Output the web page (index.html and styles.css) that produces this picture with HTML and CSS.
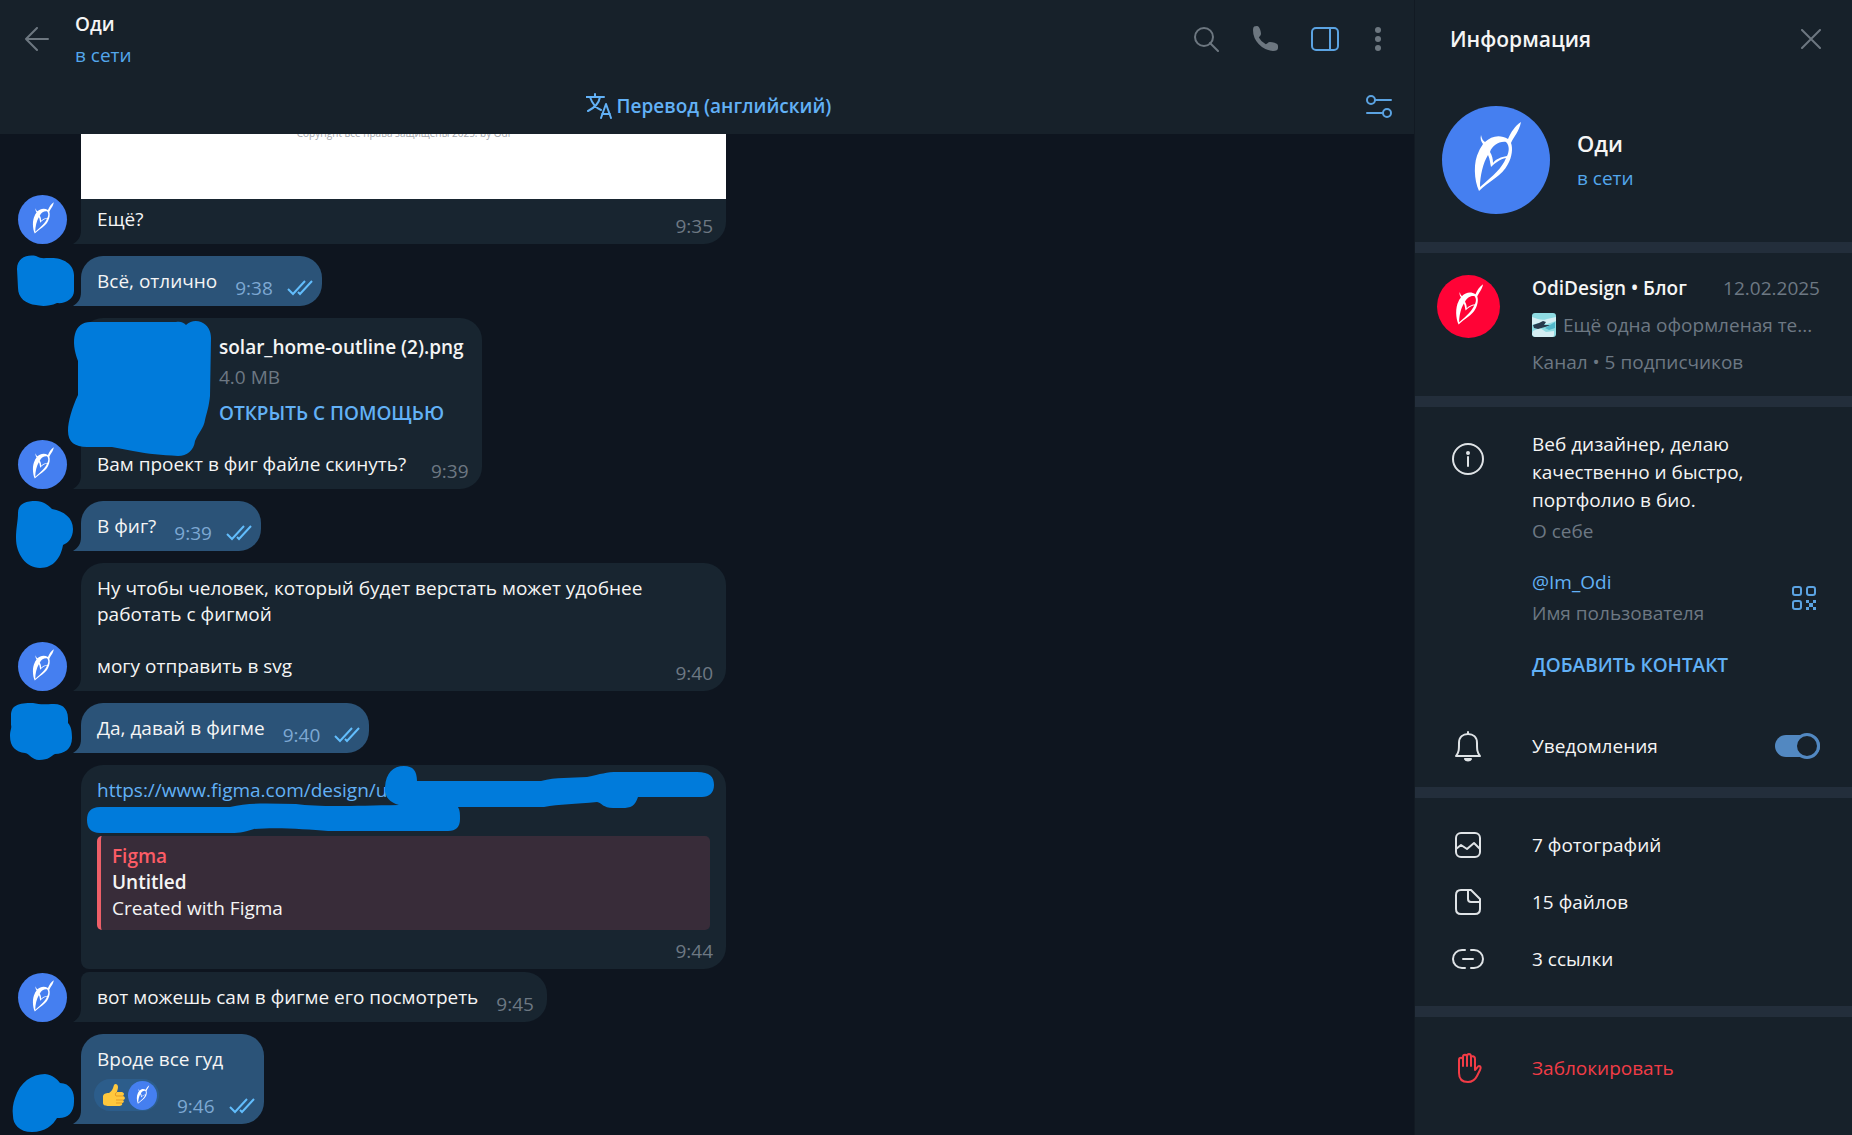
FILE: index.html
```html
<!DOCTYPE html>
<html lang="ru">
<head>
  <meta charset="UTF-8">
  <meta name="viewport" content="width=device-width, initial-scale=1.0">
  <title>Оди</title>
  <link rel="stylesheet" href="styles.css">
</head>

<body>
  <svg class="sprite" aria-hidden="true">
    <symbol id="logo" viewBox="0 0 108 108">
      <path fill="#fff" d="M79 16C77 26 72 30 69 37C71 42 70 51 66 58C60 70 47 75 37 85C32 74 31 56 37 45C38 42 40 40 41 38C39 35 38 33 39 29C40 33 41 35 43 36C49 30 58 28 66 33C69 26 73 20 79 16Z"/>
      <path class="logo-hole" d="M48 46C50 40 57 35 64 36C68 40 67 46 65 50C59 51 54 53 51 57C51 53 50 49 48 46ZM46 49C48 53 48 57 49 61C53 57 58 53 64 52C60 62 52 69 38 81C38 70 41 57 46 49Z"/>
    </symbol>
    <symbol id="checks" viewBox="0 0 26 16">
      <path d="M1 9l5 5L18 1M11 12l2 2L25 1" fill="none" stroke="currentColor" stroke-width="2"/>
    </symbol>
    <symbol id="tail" viewBox="0 0 10 24">
      <path d="M8 0V10C8 17 5 21 0 24H10V0Z" fill="currentColor"/>
    </symbol>
  </svg>

  <div class="app">
    <main class="chat">
      <header class="chat-header">
        <div class="chat-top">
          <button class="icon-btn" aria-label="Назад">
            <svg width="24" height="24" viewBox="0 0 24 24"><path d="M12 1L1 12l11 11M1 12h22"/></svg>
          </button>
          <div class="chat-title">
            <h1>Оди</h1>
            <p class="online">в сети</p>
          </div>
          <div class="chat-actions">
            <button class="icon-btn" aria-label="Поиск">
              <svg width="26" height="26" viewBox="0 0 26 26"><circle cx="11" cy="11" r="9"/><path d="M17 17l8 8"/></svg>
            </button>
            <button class="icon-btn" aria-label="Позвонить">
              <svg width="26" height="26" viewBox="0 0 26 26"><path class="solid" d="M2 4C2 1 3 1 5 1C7 1 8 7 8 8C8 10 5 10 6 12C8 16 11 18 13 19C15 20 16 17 18 17C20 17 25 18 25 20V22C25 24 23 24 21 24C10 23 2 14 2 4Z"/></svg>
            </button>
            <button class="icon-btn active" aria-label="Панель информации">
              <svg width="28" height="26" viewBox="0 0 28 26"><rect x="1" y="2" width="26" height="22" rx="4"/><path d="M19 2v22"/></svg>
            </button>
            <button class="icon-btn" aria-label="Меню">
              <svg width="26" height="26" viewBox="0 0 26 26"><g class="solid"><circle cx="13" cy="4" r="3"/><circle cx="13" cy="13" r="3"/><circle cx="13" cy="22" r="3"/></g></svg>
            </button>
          </div>
        </div>
        <div class="translate-bar">
          <button class="translate-btn">
            <svg width="26" height="26" viewBox="0 0 26 26"><path d="M0 4h18M9 1v3M4 4C6 10 10 15 15 17M14 4C13 10 8 15 2 18M15 25l5-14l5 14M16 21h8"/></svg>
            Перевод (английский)
          </button>
          <button class="icon-btn active" aria-label="Настройки перевода">
            <svg width="26" height="24" viewBox="0 0 26 24"><circle cx="5" cy="6" r="4"/><path d="M9 6h16M1 19h16"/><circle cx="21" cy="19" r="4"/></svg>
          </button>
        </div>
      </header>

      <section class="messages">
        <div class="row">
          <span class="avatar"><svg><use href="#logo"/></svg></span>
          <article class="bubble wide photo-bubble">
            <div class="photo">Copyright все права защищены 2025. by Odi</div>
            <div class="line"><p>Ещё?</p><time>9:35</time></div>
            <svg class="tail"><use href="#tail"/></svg>
          </article>
        </div>

        <div class="row">
          <svg class="scribble" viewBox="0 0 81 74"><path d="M17 25C17 14 27 10 36 12C41 15 44 14 49 14C61 13 74 19 74 31V47C74 55 65 60 57 59C48 63 40 62 36 61C26 60 18 54 18 44Z"/></svg>
          <article class="bubble own">
            <div class="line"><p>Всё, отлично</p><time>9:38</time><svg class="checks"><use href="#checks"/></svg></div>
            <svg class="tail"><use href="#tail"/></svg>
          </article>
        </div>

        <div class="row">
          <span class="avatar"><svg><use href="#logo"/></svg></span>
          <article class="bubble">
            <div class="file">
              <svg class="file-scribble" viewBox="0 0 144 138"><path d="M7 16C9 8 15 4 22 4H108C113 3 116 5 118 7C122 3 128 2 133 4C140 7 143 13 143 20L142 78C141 88 139 94 137 102C136 110 130 115 127 123C126 132 119 138 110 138C93 137 81 136 65 133L44 129H19C7 129 0 124 0 113C0 103 4 90 10 77V43C6 33 5 23 7 16Z"/></svg>
              <div class="file-info">
                <strong>solar_home-outline (2).png</strong>
                <span class="muted">4.0 MB</span>
                <button class="text-btn">ОТКРЫТЬ С ПОМОЩЬЮ</button>
              </div>
            </div>
            <div class="line"><p>Вам проект в фиг файле скинуть?</p><time>9:39</time></div>
            <svg class="tail"><use href="#tail"/></svg>
          </article>
        </div>

        <div class="row">
          <svg class="scribble" viewBox="0 0 81 74"><path d="M18 24C18 15 25 12 36 12C43 12 48 16 52 20C64 22 73 29 73 40C73 49 68 54 63 56C61 68 54 79 40 79C26 79 16 65 16 49C16 39 18 32 18 24Z"/></svg>
          <article class="bubble own">
            <div class="line"><p>В фиг?</p><time>9:39</time><svg class="checks"><use href="#checks"/></svg></div>
            <svg class="tail"><use href="#tail"/></svg>
          </article>
        </div>

        <div class="row">
          <span class="avatar"><svg><use href="#logo"/></svg></span>
          <article class="bubble wide">
            <div class="line"><p>Ну чтобы человек, который будет верстать может удобнее работать с фигмой<br><br>могу отправить в svg</p><time>9:40</time></div>
            <svg class="tail"><use href="#tail"/></svg>
          </article>
        </div>

        <div class="row">
          <svg class="scribble" viewBox="0 0 81 74"><path d="M11 25C11 14 18 12 33 12C41 14 46 13 54 13C64 13 69 19 68 32C71 35 72 40 72 47C72 58 64 63 55 63C51 65 49 69 39 69C32 69 30 63 25 62C16 61 10 56 10 45C10 39 12 37 11 34Z"/></svg>
          <article class="bubble own">
            <div class="line"><p>Да, давай в фигме</p><time>9:40</time><svg class="checks"><use href="#checks"/></svg></div>
            <svg class="tail"><use href="#tail"/></svg>
          </article>
        </div>

        <div class="row">
          <article class="bubble wide">
            <p class="link-text"><a href="#">https://www.figma.com/design/u</a></p>
            <svg class="link-scribble" viewBox="0 0 645 74"><path d="M304 22C305 8 312 1 323 1C332 1 336 6 336 16H460C475 12 490 13 506 12C520 9 525 7 537 7H616C629 7 633 12 633 20C633 28 628 32 621 32H557C554 41 550 43 541 43H532C522 43 521 38 516 37C495 39 478 39 463 42H377C379 45 379 49 379 54C379 62 375 66 367 66H247C225 64 195 62 173 64C161 68 157 68 147 68H19C10 68 6 63 6 55C6 47 10 42 19 42H149C170 37 192 39 215 39C237 42 269 41 318 40C308 37 303 31 304 22Z"/></svg>
            <a class="preview" href="#">
              <span class="preview-site">Figma</span>
              <strong>Untitled</strong>
              <span>Created with Figma</span>
            </a>
            <div class="line line-end"><time>9:44</time></div>
          </article>
        </div>

        <div class="row row-joined">
          <span class="avatar"><svg><use href="#logo"/></svg></span>
          <article class="bubble joined">
            <div class="line"><p>вот можешь сам в фигме его посмотреть</p><time>9:45</time></div>
            <svg class="tail"><use href="#tail"/></svg>
          </article>
        </div>

        <div class="row">
          <svg class="scribble" viewBox="0 0 81 74"><path d="M15 36C20 20 32 12 45 12C53 13 57 17 60 21C70 21 75 30 74 40C74 51 67 57 57 56C53 63 45 70 32 70C19 70 13 62 13 54C12 47 13 42 15 36Z"/></svg>
          <article class="bubble own">
            <p>Вроде все гуд</p>
            <div class="line">
              <button class="reaction" aria-label="Реакция">
                <svg width="24" height="24" viewBox="0 0 24 24"><path fill="#ffc83d" d="M1 13C2 10 5 10 7 10C11 7 11 5 12 2C13 0 16 1 16 4C16 6 15 8 15 9H20C23 10 22 12 21 13C24 14 23 17 21 17C23 19 21 20 20 20C21 22 19 23 17 23H8C5 23 1 23 1 20Z"/><path fill="none" stroke="#e49b25" stroke-width="1" d="M15 9C13 10 13 12 14 13M14 13h7M14 17h7M14 20h6"/></svg>
                <span class="avatar avatar-small"><svg><use href="#logo"/></svg></span>
              </button>
              <time>9:46</time><svg class="checks"><use href="#checks"/></svg>
            </div>
            <svg class="tail"><use href="#tail"/></svg>
          </article>
        </div>
      </section>
    </main>

    <aside class="info">
      <header class="info-header">
        <h2>Информация</h2>
        <button class="icon-btn" aria-label="Закрыть">
          <svg width="20" height="20" viewBox="0 0 20 20"><path d="M1 1l18 18M19 1L1 19"/></svg>
        </button>
      </header>

      <section class="profile">
        <span class="avatar avatar-large"><svg><use href="#logo"/></svg></span>
        <div>
          <h3>Оди</h3>
          <p class="online">в сети</p>
        </div>
      </section>

      <section class="channel">
        <span class="avatar avatar-channel"><svg><use href="#logo"/></svg></span>
        <div class="channel-body">
          <div class="channel-row"><strong>OdiDesign • Блог</strong><span class="muted">12.02.2025</span></div>
          <div class="channel-row channel-post">
            <svg width="24" height="24" viewBox="0 0 24 24"><rect width="24" height="24" rx="3" fill="#8edbe2"/><path fill="#d5eef3" d="M0 4C6 6 10 8 15 6L24 4V8L15 11L6 10L0 12ZM1 18L8 15L14 19L22 18V22C22 23 21 24 20 24H4C2 24 0 22 0 21Z"/><path fill="#26394c" d="M1 12L7 10L11 8L14 9L12 12L19 12L13 14L6 16L2 15Z"/><path fill="#52b7ca" d="M13 15L23 9V15L17 17Z"/></svg>
            <span class="muted">Ещё одна оформленая те...</span>
          </div>
          <p class="muted">Канал • 5 подписчиков</p>
        </div>
      </section>

      <section class="details">
        <div class="item about">
          <svg class="item-icon" viewBox="0 0 32 32"><circle cx="16" cy="16" r="15"/><path d="M16 14v9"/><circle class="solid" cx="16" cy="10" r="1"/></svg>
          <div>
            <p class="bio">Веб дизайнер, делаю качественно и быстро, портфолио в био.</p>
            <p class="muted">О себе</p>
          </div>
        </div>
        <div class="item username">
          <div>
            <a href="#">@Im_Odi</a>
            <p class="muted">Имя пользователя</p>
          </div>
          <button class="icon-btn active" aria-label="QR-код">
            <svg width="24" height="24" viewBox="0 0 24 24"><rect x="1" y="1" width="8" height="8" rx="2"/><rect x="15" y="1" width="8" height="8" rx="2"/><rect x="1" y="15" width="8" height="8" rx="2"/><path class="solid-dots" d="M14 14h3v3h-3zM21 14h3v3h-3zM17 17h4v4h-4zM14 21h3v3h-3zM21 21h3v3h-3z"/></svg>
          </button>
        </div>
        <button class="text-btn add-contact">ДОБАВИТЬ КОНТАКТ</button>
        <label class="item notify">
          <svg class="item-icon" viewBox="0 0 32 32"><path d="M16 2v2M4 26C7 22 7 20 7 13C7 7 11 4 16 4S25 7 25 13C25 20 25 22 28 26Z"/><path class="solid" d="M13 29h6C18 31 14 31 13 29Z"/></svg>
          <span>Уведомления</span>
          <input class="toggle" type="checkbox" checked>
        </label>
      </section>

      <section class="media">
        <a class="item" href="#">
          <svg class="item-icon" viewBox="0 0 32 32"><rect x="4" y="4" width="24" height="24" rx="5"/><path d="M4 20l5-4l6 4l7-6l6 6"/></svg>
          <span>7 фотографий</span>
        </a>
        <a class="item" href="#">
          <svg class="item-icon" viewBox="0 0 32 32"><path d="M19 4H9C6 4 4 6 4 9V23C4 26 6 28 9 28H23C26 28 28 26 28 23V13ZM16 4V13C16 15 17 16 19 16H28"/></svg>
          <span>15 файлов</span>
        </a>
        <a class="item" href="#">
          <svg class="item-icon" viewBox="0 0 32 32"><path d="M13 7H10C5 7 1 11 1 16S5 25 10 25H13M19 7h3C27 7 31 11 31 16S27 25 22 25H19M11 16h10"/></svg>
          <span>3 ссылки</span>
        </a>
      </section>

      <section class="danger">
        <button class="item">
          <svg class="item-icon" viewBox="0 0 32 32"><path d="M7 17V8C7 5 11 5 11 8V14M11 9V5C11 2 15 2 15 5V14M15 5C15 1 19 1 19 5V14M19 6C19 3 23 4 23 7V18C25 16 26 14 27 14C29 14 29 16 28 18L25 24C23 28 21 30 16 30C10 30 7 27 7 21V17"/></svg>
          <span>Заблокировать</span>
        </button>
      </section>
    </aside>
  </div>
</body>
</html>
```

FILE: styles.css
```css
*,
*::before,
*::after {
  box-sizing: border-box;
}

body {
  margin: 0;
  background-color: #0e151f;
  color: #f5f5f5;
  font-family: "Open Sans", "Noto Sans", sans-serif;
  font-size: 19px;
  line-height: 26px;
}

h1,
h2,
h3,
p {
  margin: 0;
  font-size: inherit;
  font-weight: inherit;
}

h1,
h2,
h3,
strong {
  font-weight: 600;
}

a {
  color: #62b1f6;
  text-decoration: none;
}

button {
  padding: 0;
  border: 0;
  background: none;
  color: inherit;
  font: inherit;
  cursor: pointer;
}

svg {
  display: block;
  flex: none;
}

.sprite {
  position: absolute;
  width: 0;
  height: 0;
}

.app {
  display: flex;
  height: 100vh;
}

.muted {
  color: #6d7883;
}

.online {
  color: #53a7ec;
}

.icon-btn {
  display: flex;
  color: #6d7780;
}

.icon-btn svg,
.translate-btn svg,
.item-icon {
  fill: none;
  stroke: currentColor;
  stroke-width: 2;
  stroke-linecap: round;
  stroke-linejoin: round;
}

.icon-btn.active {
  color: #5ba3e2;
}

.icon-btn .solid,
.item-icon .solid {
  fill: currentColor;
}

.icon-btn g.solid,
.solid-dots {
  stroke: none;
  fill: currentColor;
}

.text-btn {
  color: #62b1f6;
  font-weight: 600;
}

/* chat */
.chat {
  display: flex;
  flex: 1;
  flex-direction: column;
  min-width: 0;
}

.chat-header {
  flex: none;
  height: 134px;
  background-color: #17212a;
}

.chat-top {
  display: flex;
  align-items: center;
  gap: 26px;
  height: 78px;
  padding: 0 23px 0 25px;
}

.chat-title {
  flex: 1;
}

.chat-title .online {
  margin-top: 5px;
}

.chat-actions {
  display: flex;
  align-items: center;
  gap: 33px;
}

.chat-actions .active {
  margin-right: -7px;
}

.translate-bar {
  display: flex;
  align-items: center;
  height: 56px;
  padding: 0 22px 0 51px;
}

.translate-btn {
  display: flex;
  align-items: center;
  gap: 5px;
  margin: 0 auto;
  color: #62b1f6;
  font-weight: 600;
}

.messages {
  display: flex;
  flex: 1;
  flex-direction: column;
  justify-content: flex-end;
  gap: 12px;
  min-height: 0;
  padding-bottom: 11px;
  overflow: hidden;
}

.row {
  position: relative;
  display: flex;
  flex: none;
  align-items: flex-end;
  padding-left: 81px;
}

.row-joined {
  margin-top: -9px;
}

.avatar {
  display: block;
  flex: none;
  width: 49px;
  height: 49px;
  border-radius: 50%;
  background-color: #457ff0;
  fill: #457ff0;
}

.avatar svg {
  width: 100%;
  height: 100%;
}

.row > .avatar {
  margin: 0 14px 0 -63px;
}

.avatar-small {
  width: 29px;
  height: 29px;
}

.avatar-large {
  width: 108px;
  height: 108px;
}

.avatar-channel {
  width: 63px;
  height: 63px;
  background-color: #ff0336;
  fill: #ff0336;
}

.scribble {
  position: absolute;
  bottom: -12px;
  left: 0;
  width: 81px;
  height: 74px;
  overflow: visible;
  fill: #007bdb;
}

.bubble {
  position: relative;
  max-width: 645px;
  padding: 12px 13px 12px 16px;
  border-radius: 22px 22px 22px 0;
  background-color: #182530;
  color: #f5f5f5;
}

.bubble.wide {
  width: 645px;
}

.bubble.joined {
  border-top-left-radius: 8px;
}

.bubble.own {
  padding-right: 9px;
  background-color: #2b5378;
}

.row:not(:has(.tail)) .bubble {
  border-bottom-left-radius: 8px;
}

.tail {
  position: absolute;
  bottom: 0;
  left: -8px;
  width: 10px;
  height: 24px;
  color: #182530;
}

.own .tail {
  color: #2b5378;
}

.line {
  display: flex;
  align-items: flex-end;
}

.line p {
  flex: 1;
}

time {
  margin: 0 0 -7px 18px;
  color: #6d7883;
}

.own time {
  color: #7da8d3;
}

.checks {
  width: 26px;
  height: 16px;
  margin: 0 0 -2px 14px;
  color: #62bdfc;
}

.line-end {
  justify-content: flex-end;
}

.photo-bubble {
  padding-top: 0;
}

.photo {
  height: 76px;
  margin: 0 -13px 7px -16px;
  background-color: #fff;
  color: #a4a7ac;
  font-size: 10px;
  line-height: 20px;
  text-align: center;
}

.file {
  display: flex;
  min-height: 121px;
  padding: 4px 5px 0 122px;
}

.file-scribble {
  position: absolute;
  top: 0;
  left: -13px;
  width: 144px;
  height: 138px;
  fill: #007bdb;
}

.file-info {
  display: flex;
  flex-direction: column;
  align-items: flex-start;
  gap: 4px;
}

.file-info .text-btn {
  margin-top: 6px;
}

.link-text {
  height: 59px;
}

.link-scribble {
  position: absolute;
  top: 0;
  left: 0;
  width: 645px;
  height: 74px;
  fill: #007bdb;
}

.preview {
  display: flex;
  flex-direction: column;
  margin-right: 3px;
  padding: 7px 11px 9px;
  border-left: 4px solid #ed5f68;
  border-radius: 5px;
  background-color: #382c39;
  color: #f5f5f5;
}

.preview-site {
  color: #fc5c66;
  font-weight: 600;
}

.preview + .line {
  padding-top: 8px;
}

.reaction {
  display: flex;
  align-items: center;
  gap: 2px;
  height: 32px;
  margin: 7px 0 1px -3px;
  padding: 0 2px 0 8px;
  border-radius: 16px;
  background-color: #2c5d8b;
}

/* info panel */
.info {
  flex: none;
  width: 438px;
  border-left: 1px solid #121a23;
  background-color: #17212a;
}

.info-header {
  display: flex;
  align-items: center;
  justify-content: space-between;
  height: 78px;
  padding: 0 31px 0 35px;
  font-size: 21px;
}

.profile {
  display: flex;
  align-items: center;
  gap: 27px;
  height: 164px;
  padding: 0 27px 0 27px;
}

.profile h3 {
  margin-bottom: 9px;
  padding-top: 1px;
  font-size: 22px;
}

.channel,
.details,
.media,
.danger {
  border-top: 11px solid #232e3b;
}

.channel {
  display: flex;
  gap: 32px;
  height: 154px;
  padding: 22px 32px 0 22px;
}

.channel-body {
  display: flex;
  flex: 1;
  flex-direction: column;
  gap: 11px;
  min-width: 0;
}

.channel-row {
  display: flex;
  align-items: center;
  justify-content: space-between;
}

.channel-post {
  justify-content: flex-start;
  gap: 7px;
  white-space: nowrap;
}

.item {
  display: flex;
  align-items: center;
  gap: 48px;
  min-height: 57px;
  padding: 0 32px 0 37px;
  color: #f5f5f5;
}

.item-icon {
  width: 32px;
  height: 32px;
  color: #dfe3e6;
}

.details {
  padding-top: 23px;
}

.item.about {
  align-items: flex-start;
}

.about .item-icon {
  margin-top: 13px;
}

.bio {
  max-width: 240px;
  margin-bottom: 4px;
  line-height: 28px;
}

.item.username {
  justify-content: space-between;
  margin-top: 25px;
  padding: 0 36px 0 117px;
}

.username .muted {
  margin-top: 5px;
}

.add-contact {
  display: block;
  margin: 26px 117px 0;
  white-space: nowrap;
}

.notify {
  margin-top: 39px;
}

.toggle {
  position: relative;
  width: 45px;
  height: 22px;
  margin: 0 0 0 auto;
  border-radius: 11px;
  background-color: #5288c1;
  appearance: none;
}

.toggle::after {
  position: absolute;
  top: -2px;
  right: 0;
  width: 26px;
  height: 26px;
  border: 3px solid #5288c1;
  border-radius: 50%;
  background-color: #17212a;
  content: "";
}

.media {
  margin-top: 13px;
  padding: 18px 0 19px;
}

.danger {
  padding-top: 22px;
}

.danger .item,
.danger .item-icon {
  color: #f23c46;
}
```
